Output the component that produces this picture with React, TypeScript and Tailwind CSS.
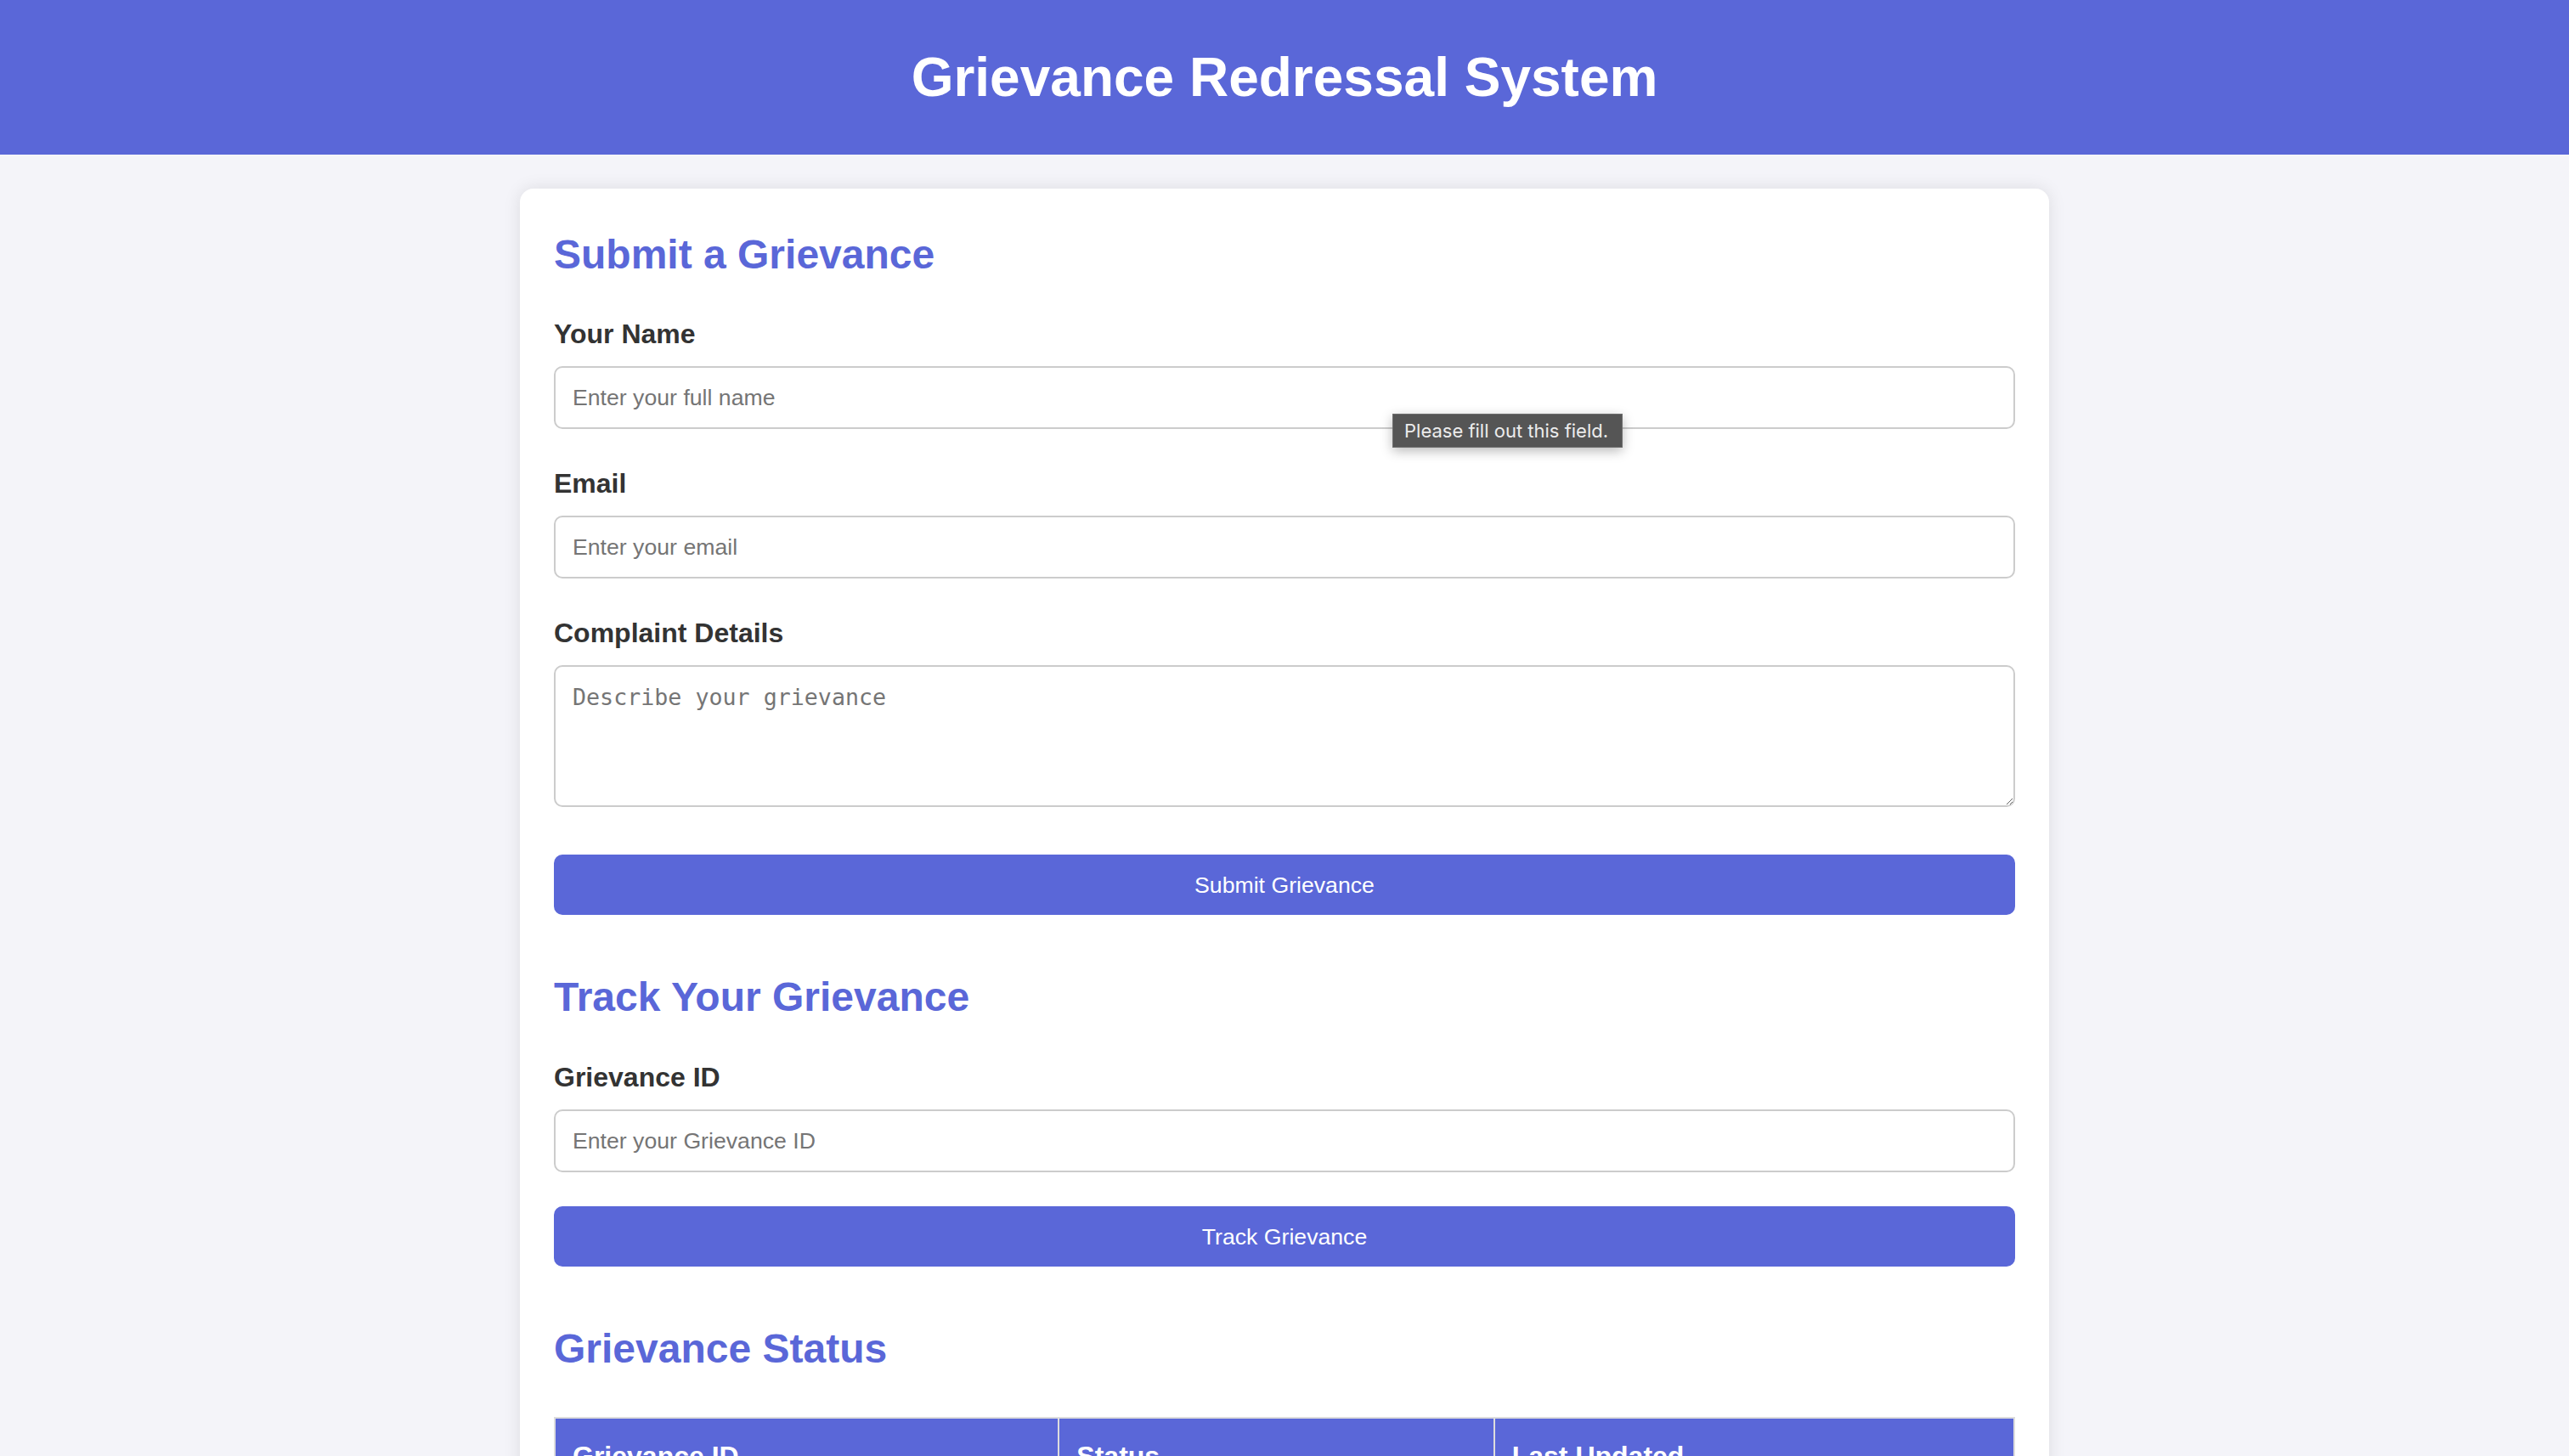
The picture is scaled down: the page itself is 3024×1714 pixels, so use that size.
import React from 'react';

const BLUE = 'text-[#5a67d8]';

function Field({ label, placeholder, type = 'text', tooltip }: { label: string; placeholder: string; type?: string; tooltip?: boolean }) {
  return (
    <div>
      <label className="block text-[32px] leading-[37px] font-bold text-[#333] mb-[19px]">{label}</label>
      <div className="relative">
        <input
          type={type}
          placeholder={placeholder}
          className="block w-full h-[74px] border-2 border-[#ccc] rounded-[10px] px-[20px] bg-white font-['Liberation_Sans',Arial,sans-serif] text-[26.67px] text-[#222] placeholder:text-[#757575] outline-none"
        />
        {tooltip && (
          <div className="absolute left-[987px] top-[56px] w-[271px] h-[40px] flex items-center px-[13px] bg-[#555555] border border-[#6e6e6e] text-[#ececec] font-['Inter',sans-serif] text-[22px] leading-[38px] shadow-[0_4px_14px_rgba(0,0,0,0.28)] whitespace-nowrap">
            Please fill out this field.
          </div>
        )}
      </div>
    </div>
  );
}

export default function App() {
  return (
    <div className="h-screen overflow-hidden bg-[#f4f4f9] font-['Liberation_Sans',Arial,sans-serif]">
      <header className="h-[182px] bg-[#5a67d8] flex items-center justify-center">
        <h1 className="text-[64px] leading-[74px] font-bold text-white">Grievance Redressal System</h1>
      </header>

      <div className="mx-auto mt-[40px] w-[1800px] bg-white rounded-[16px] shadow-[0_0_20px_rgba(0,0,0,0.1)] px-[40px] pt-[50px] pb-[40px]">
        {/* submit */}
        <h2 className={`text-[48px] leading-[56px] font-bold ${BLUE}`}>Submit a Grievance</h2>
        <div className="mt-[47px] flex flex-col gap-[46px]">
          <Field label="Your Name" placeholder="Enter your full name" tooltip />
          <Field label="Email" placeholder="Enter your email" type="email" />
          <div>
            <label className="block text-[32px] leading-[37px] font-bold text-[#333] mb-[19px]">Complaint Details</label>
            <textarea
              placeholder="Describe your grievance"
              className="block w-full h-[167px] border-2 border-[#ccc] rounded-[10px] px-[20px] py-[20px] bg-white font-['DejaVu_Sans_Mono',monospace] text-[26.67px] leading-[31px] text-[#222] placeholder:text-[#757575] outline-none"
            />
          </div>
        </div>
        <button className="mt-[56px] block w-full h-[71px] rounded-[10px] bg-[#5a67d8] text-white text-[26.67px]">
          Submit Grievance
        </button>

        {/* track */}
        <h2 className={`mt-[69px] text-[48px] leading-[56px] font-bold ${BLUE}`}>Track Your Grievance</h2>
        <div className="mt-[48px]">
          <Field label="Grievance ID" placeholder="Enter your Grievance ID" />
        </div>
        <button className="mt-[40px] block w-full h-[71px] rounded-[10px] bg-[#5a67d8] text-white text-[26.67px]">
          Track Grievance
        </button>

        {/* status */}
        <h2 className={`mt-[69px] text-[48px] leading-[56px] font-bold ${BLUE}`}>Grievance Status</h2>
        <table className="mt-[52px] w-full border-collapse border-2 border-[#ddd]">
          <thead>
            <tr>
              <th className="w-[594px] bg-[#5a67d8] text-white text-left text-[32px] leading-[37px] font-bold px-[20px] py-[26px] border-2 border-[#ddd]">Grievance ID</th>
              <th className="w-[513px] bg-[#5a67d8] text-white text-left text-[32px] leading-[37px] font-bold px-[20px] py-[26px] border-2 border-[#ddd]">Status</th>
              <th className="w-[613px] bg-[#5a67d8] text-white text-left text-[32px] leading-[37px] font-bold px-[20px] py-[26px] border-2 border-[#ddd]">Last Updated</th>
            </tr>
          </thead>
          <tbody>
            <tr>
              <td className="px-[20px] py-[24px] text-[32px] border-2 border-[#ddd]">&nbsp;</td>
              <td className="px-[20px] py-[24px] text-[32px] border-2 border-[#ddd]">&nbsp;</td>
              <td className="px-[20px] py-[24px] text-[32px] border-2 border-[#ddd]">&nbsp;</td>
            </tr>
          </tbody>
        </table>
      </div>
    </div>
  );
}
